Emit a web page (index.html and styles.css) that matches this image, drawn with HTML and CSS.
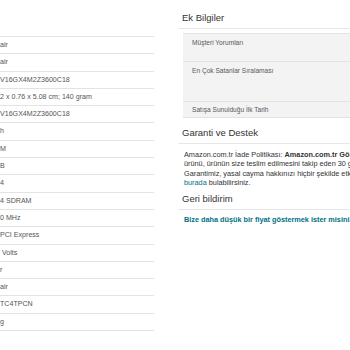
FILE: index.html
```html
<!DOCTYPE html>
<html lang="tr">
<head>
<meta charset="utf-8">
<link rel="stylesheet" href="styles.css">
</head>
<body>
<div class="page">
  <section class="specs">
    <div class="spec">air</div>
    <div class="spec">air</div>
    <div class="spec">V16GX4M2Z3600C18</div>
    <div class="spec">2 x 0.76 x 5.08 cm; 140 gram</div>
    <div class="spec">V16GX4M2Z3600C18</div>
    <div class="spec">h</div>
    <div class="spec">M</div>
    <div class="spec">B</div>
    <div class="spec">4</div>
    <div class="spec">4 SDRAM</div>
    <div class="spec">0 MHz</div>
    <div class="spec">PCI Express</div>
    <div class="spec">&nbsp;Volts</div>
    <div class="spec">r</div>
    <div class="spec">air</div>
    <div class="spec">TC4TPCN</div>
    <div class="spec">g</div>
  </section>
  <section class="side">
    <h2 class="title title-first">Ek Bilgiler</h2>
    <div class="info">
      <div class="info-row row-reviews">Müşteri Yorumları</div>
      <div class="info-row row-rank">En Çok Satanlar Sıralaması</div>
      <div class="info-row row-date">Satışa Sunulduğu İlk Tarih</div>
    </div>
    <h2 class="title">Garanti ve Destek</h2>
    <p class="text">
      <span class="line">Amazon.com.tr İade Politikası: <b>Amazon.com.tr Gönderimli</b></span>
      <span class="line">ürünü, ürünün size teslim edilmesini takip eden 30 gün</span>
      <span class="line">Garantimiz, yasal cayma hakkınızı hiçbir şekilde etkilemez.</span>
      <span class="line"><a class="link" href="#">burada</a> bulabilirsiniz.</span>
    </p>
    <h2 class="title">Geri bildirim</h2>
    <a class="feedback" href="#">Bize daha düşük bir fiyat göstermek ister misiniz?</a>
  </section>
</div>
</body>
</html>
```

FILE: styles.css
```css
html, body {
  margin: 0;
  padding: 0;
  background: #ffffff;
}

body {
  width: 350px;
  height: 350px;
  overflow: hidden;
  font-family: "Liberation Sans", Arial, sans-serif;
  color: #333333;
}

.page {
  display: flex;
  gap: 24px;
  width: 600px;
}

.specs {
  width: 154px;
  flex: none;
  padding-top: 36px;
}

.spec {
  height: 16.3px;
  line-height: 16.3px;
  border-top: 1px solid #e3e3e3;
  font-size: 7.1px;
  color: #555555;
  white-space: nowrap;
  overflow: hidden;
}

.spec:last-child {
  border-bottom: 1px solid #e3e3e3;
}

.side {
  width: 380px;
  flex: none;
}

.title {
  margin: 0;
  font-size: 9.5px;
  font-weight: normal;
  color: #333333;
  padding: 0 0 4px 4px;
  border-bottom: 1px solid #e7e7e7;
  line-height: 12px;
}

.title-first {
  padding-top: 12px;
}

.info {
  margin: 4px 0 0 5px;
  border-top: 1px solid #e3e3e3;
  background: #f3f3f3;
}

.info-row {
  font-size: 6.6px;
  color: #565959;
  padding: 5px 0 0 9px;
  border-bottom: 1px solid #e3e3e3;
  box-sizing: border-box;
  white-space: nowrap;
}

.row-reviews {
  height: 28px;
}

.row-rank {
  height: 40px;
}

.row-date {
  height: 16px;
  padding-top: 4px;
}

.info + .title {
  margin-top: 9px;
}

.text {
  margin: 6px 0 0 6px;
  font-size: 7.3px;
  line-height: 9.3px;
  color: #333333;
}

.line {
  display: block;
  white-space: nowrap;
}

.link {
  color: #007185;
  text-decoration: none;
}

.text + .title {
  margin-top: 6px;
}

.feedback {
  display: block;
  margin: 5px 0 0 6px;
  font-size: 7.3px;
  font-weight: bold;
  color: #007185;
  text-decoration: none;
  white-space: nowrap;
}
```
